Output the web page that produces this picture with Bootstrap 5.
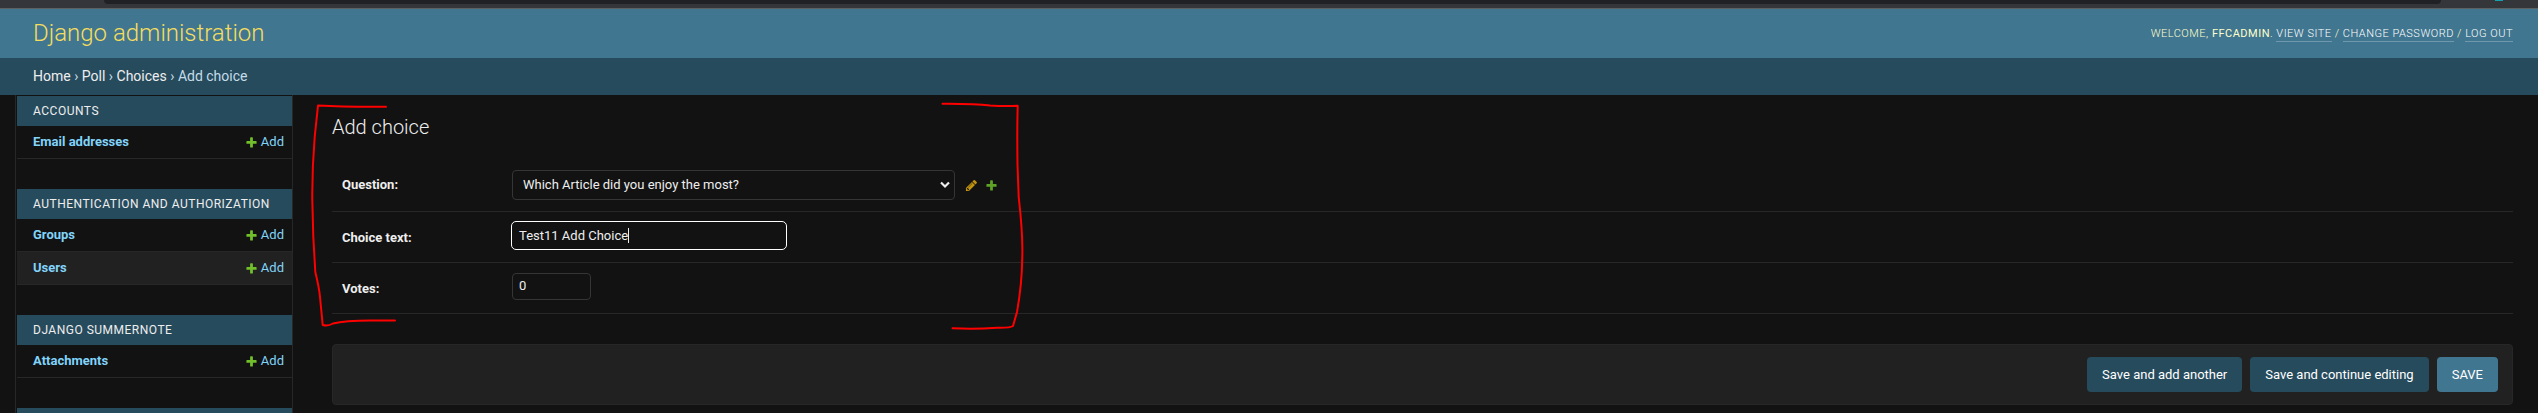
<!DOCTYPE html>
<html lang="en">
<head>
<meta charset="utf-8">
<meta name="viewport" content="width=device-width, initial-scale=1">
<title>Add choice | Django administration</title>
<link href="https://cdn.jsdelivr.net/npm/bootstrap@5.3.0/dist/css/bootstrap.min.css" rel="stylesheet">
<script src="https://cdn.jsdelivr.net/npm/bootstrap@5.3.0/dist/js/bootstrap.bundle.min.js" defer></script>
<style>
body{font-family:Roboto,"Liberation Sans",sans-serif;font-size:13px;line-height:20px;background:#121212;color:#eee;height:413px}
a{color:#81d4fa;text-decoration:none}
.chrome{height:9px;background:#35363a;border-bottom:1px solid #5f6062}
.chrome-url{height:4px;background:#202124;margin:0 54px 0 104px;border-radius:0 0 14px 14px}
.chrome-dot{width:8px;height:1px;background:#14a2b0;margin-right:35px}
.site-head{height:49px;background:#417690;padding:0 25px 0 33px}
.site-title{font-size:24px;font-weight:300;color:#f5dd5d;line-height:49px}
.user-tools{font-size:11px;font-weight:300;letter-spacing:.5px;color:#ffc;text-transform:uppercase;line-height:14px;padding-top:1px}
.user-tools a{color:#fff;border-bottom:1px solid rgba(255,255,255,.25);display:inline-block;line-height:15px}
.crumbs{height:37px;background:#264b5d;padding:0 33px;font-size:14px;line-height:37px;color:#c4dce8}
.crumbs a{color:#eee}
.side{width:278px;margin-left:15px;border:solid #272727;border-width:0 1px;padding:1px 0 0 1px;height:318px;overflow:hidden}
.app-module{margin-bottom:30px}
.app-caption{height:30px;background:#264b5d;padding-left:16px;font-size:12px;letter-spacing:.5px;line-height:30px;text-transform:uppercase}
.app-row{height:33px;border-bottom:1px solid #272727;padding:0 8px 0 16px;font-size:13px;font-weight:700}
.app-row a+a{font-weight:400;font-size:13px;gap:3px}
.content-col{padding:0 25px 0 39px}
.page-title{font-size:20px;font-weight:300;line-height:24px;margin:20px 0 20px}
.form-line{height:51px;border-bottom:1px solid #272727;padding-left:10px}
.form-line.first{height:53px}
.form-line>label{width:170px;font-weight:700;font-size:13px}
.form-line:not(.first)>label{padding-top:2px}
.f-box{background:#121212;border:1px solid #353535;border-radius:4px;color:#eee;font-size:13px}
.f-select{width:443px;height:30px;padding:0 4px 0 10px;margin-bottom:1px}
.f-text{width:276px;height:29px;border-color:#fff;border-radius:5px;margin:0 0 3px -1px;padding:0 7px}
.f-num{width:79px;height:27px;padding:0 6px;margin-bottom:4px}
.caret{width:1px;height:15px;background:#eee}
.submit-line{height:61px;margin-top:30px;background:#212121;border:1px solid #272727;border-radius:4px;padding:0 14px;gap:8px}
.btn-dj{height:35px;background:#264b5d;color:#fff;font-size:13px;line-height:15px;border:0;border-radius:4px;padding:10px 15px}
.btn-dj.main{background:#417690}
.scribble{position:absolute;left:0;top:0;pointer-events:none}
</style>
</head>
<body class="overflow-hidden position-relative">
<div class="chrome d-flex align-items-start"><div class="chrome-url flex-grow-1"></div><div class="chrome-dot"></div></div>
<header class="site-head d-flex justify-content-between align-items-center">
  <div class="site-title">Django administration</div>
  <div class="user-tools">Welcome, <strong>ffcadmin</strong>. <a href="#">View site</a> / <a href="#">Change password</a> / <a href="#">Log out</a></div>
</header>
<nav class="crumbs"><a href="#">Home</a> › <a href="#">Poll</a> › <a href="#">Choices</a> › Add choice</nav>
<svg width="0" height="0" class="position-absolute">
  <symbol id="plus" viewBox="0 0 1792 1792"><path d="M1600 796v192q0 40-28 68t-68 28h-416v416q0 40-28 68t-68 28h-192q-40 0-68-28t-28-68v-416h-416q-40 0-68-28t-28-68v-192q0-40 28-68t68-28h416v-416q0-40 28-68t68-28h192q40 0 68 28t28 68v416h416q40 0 68 28t28 68z"/></symbol>
  <symbol id="pencil" viewBox="0 0 1792 1792"><path d="M491 1536l91-91-235-235-91 91v107h128v128h107zm523-928q0-22-22-22-10 0-17 7l-542 542q-7 7-7 17 0 22 22 22 10 0 17-7l542-542q7-7 7-17zm-54-192l416 416-832 832h-416v-416zm683 96q0 53-37 90l-166 166-416-416 166-165q36-38 90-38 53 0 91 38l235 234q37 39 37 91z"/></symbol>
</svg>
<div class="d-flex">
  <aside class="side flex-shrink-0">
    <section class="app-module">
      <div class="app-caption">Accounts</div>
      <div class="app-row d-flex justify-content-between align-items-center"><a href="#">Email addresses</a><a href="#" class="d-flex align-items-center"><svg width="13" height="13" fill="#70bf2b"><use href="#plus"/></svg>Add</a></div>
    </section>
    <section class="app-module">
      <div class="app-caption">Authentication and Authorization</div>
      <div class="app-row d-flex justify-content-between align-items-center"><a href="#">Groups</a><a href="#" class="d-flex align-items-center"><svg width="13" height="13" fill="#70bf2b"><use href="#plus"/></svg>Add</a></div>
      <div class="app-row d-flex justify-content-between align-items-center" style="background:#212121"><a href="#">Users</a><a href="#" class="d-flex align-items-center"><svg width="13" height="13" fill="#70bf2b"><use href="#plus"/></svg>Add</a></div>
    </section>
    <section class="app-module">
      <div class="app-caption">Django Summernote</div>
      <div class="app-row d-flex justify-content-between align-items-center"><a href="#">Attachments</a><a href="#" class="d-flex align-items-center"><svg width="13" height="13" fill="#70bf2b"><use href="#plus"/></svg>Add</a></div>
    </section>
    <section class="app-module"><div class="app-caption"></div></section>
  </aside>
  <main class="content-col flex-grow-1">
    <h1 class="page-title">Add choice</h1>
    <div class="form-line first d-flex align-items-center">
      <label>Question:</label>
      <div class="f-box f-select d-flex align-items-center justify-content-between"><span>Which Article did you enjoy the most?</span>
        <svg width="10" height="8" fill="none" stroke="#eee" stroke-width="2.2"><path d="M1 1.500 5 5.500 9 1.500"/></svg></div>
      <svg style="margin:1px 7px 0 10px" width="13" height="13" fill="#c1930f"><use href="#pencil"/></svg>
      <svg style="margin-top:1px" width="13" height="13" fill="#5fa225"><use href="#plus"/></svg>
    </div>
    <div class="form-line d-flex align-items-center">
      <label>Choice text:</label>
      <div class="f-box f-text d-flex align-items-center"><span>Test11 Add Choice</span><span class="caret"></span></div>
    </div>
    <div class="form-line d-flex align-items-center">
      <label>Votes:</label>
      <div class="f-box f-num d-flex align-items-center">0</div>
    </div>
    <div class="submit-line d-flex align-items-center justify-content-end">
      <button class="btn btn-dj">Save and add another</button>
      <button class="btn btn-dj">Save and continue editing</button>
      <button class="btn btn-dj main">SAVE</button>
    </div>
  </main>
</div>
<svg class="scribble" width="1100" height="413" fill="none" stroke="#f00" stroke-width="2" stroke-linecap="round" stroke-linejoin="round">
  <path d="M386 106.700 Q345 107 318 105.500 L314.700 137 Q312 170 312.300 200 L313.300 237 L315.300 272 Q319 287 320 297 L322.700 325 Q328 326.500 333 323.500 Q345 320.500 370 320.500 H395"/>
  <path d="M942.500 103.700 Q975 103.500 990 105.500 Q1005 106.500 1017.700 105.700 Q1017 130 1017.500 165 L1018.700 197 Q1023 235 1022.300 257 Q1022 284 1017 312 L1013 326 Q1010 328 997 327.700 Q975 329.500 952.500 328.300"/>
</svg>
</body>
</html>
